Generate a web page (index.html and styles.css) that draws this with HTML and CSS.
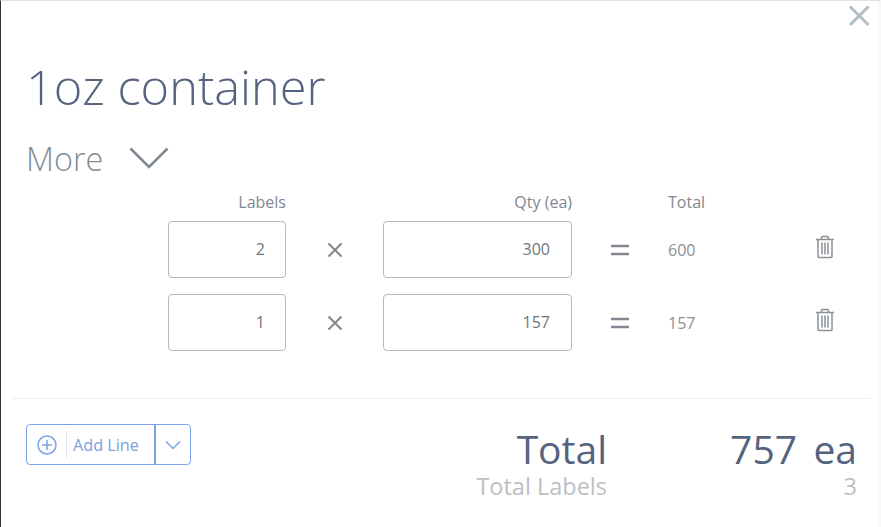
FILE: index.html
```html
<!DOCTYPE html>
<html lang="en">
<head>
<meta charset="utf-8">
<title>1oz container</title>
<link rel="stylesheet" href="styles.css">
</head>
<body>
<div class="modal">
  <button class="close" aria-label="Close">
    <svg width="24" height="24" viewBox="0 0 24 24"><path d="M3 2.500L21.500 21M21.500 2.500L3 21" class="close-x"/></svg>
  </button>
  <header class="head">
    <h1 class="title">1oz container</h1>
    <div class="more">
      <span>More</span>
      <svg width="40" height="24" viewBox="0 0 40 24"><path d="M1.500 2.500L20 21L38.500 2.500" class="chev"/></svg>
    </div>
  </header>
  <section class="lines">
    <div class="col-h col-end">Labels</div>
    <div></div>
    <div class="col-h col-end">Qty (ea)</div>
    <div></div>
    <div class="col-h">Total</div>
    <div></div>

    <div class="field field-labels">2</div>
    <div class="op"><svg width="16" height="16" viewBox="0 0 16 16"><path d="M1.500 1.500L14.500 14.500M14.500 1.500L1.500 14.500" class="op-s"/></svg></div>
    <div class="field">300</div>
    <div class="op"><svg width="20" height="12" viewBox="0 0 20 12"><path d="M1 2H19M1 10H19" class="op-e"/></svg></div>
    <div class="sum">600</div>
    <div class="trash"><svg width="20" height="24" viewBox="0 0 20 24"><path d="M1 4.500H19M6.500 4.500V2.500Q6.500 1.500 7.500 1.500H12.500Q13.500 1.500 13.500 2.500V4.500M3 4.500V21.500Q3 22.500 4 22.500H16Q17 22.500 17 21.500V4.500M7 7.500V19.500M10 7.500V19.500M13 7.500V19.500" class="bin"/></svg></div>

    <div class="field field-labels">1</div>
    <div class="op"><svg width="16" height="16" viewBox="0 0 16 16"><path d="M1.500 1.500L14.500 14.500M14.500 1.500L1.500 14.500" class="op-s"/></svg></div>
    <div class="field">157</div>
    <div class="op"><svg width="20" height="12" viewBox="0 0 20 12"><path d="M1 2H19M1 10H19" class="op-e"/></svg></div>
    <div class="sum">157</div>
    <div class="trash"><svg width="20" height="24" viewBox="0 0 20 24"><path d="M1 4.500H19M6.500 4.500V2.500Q6.500 1.500 7.500 1.500H12.500Q13.500 1.500 13.500 2.500V4.500M3 4.500V21.500Q3 22.500 4 22.500H16Q17 22.500 17 21.500V4.500M7 7.500V19.500M10 7.500V19.500M13 7.500V19.500" class="bin"/></svg></div>
  </section>
  <footer class="foot">
    <div class="add">
      <div class="add-main">
        <svg width="20" height="20" viewBox="0 0 20 20"><circle cx="10" cy="10" r="9" class="blue-s"/><path d="M10 5V15M5 10H15" class="blue-s"/></svg>
        <span class="add-sep"></span>
        <span class="add-text">Add Line</span>
      </div>
      <div class="add-drop">
        <svg width="16" height="10" viewBox="0 0 16 10"><path d="M1 1.500L8 8.500L15 1.500" class="blue-s"/></svg>
      </div>
    </div>
    <div class="totals">
      <div class="t-name">Total</div>
      <div class="t-num">757</div>
      <div class="t-unit">ea</div>
      <div class="s-name">Total Labels</div>
      <div class="s-num">3</div>
    </div>
  </footer>
</div>
</body>
</html>
```
FILE: styles.css
```css
* { box-sizing: border-box; }
html, body { margin: 0; height: 100%; background: #fff; }
body { font-family: "Open Sans", sans-serif; color: #7f8890; overflow: hidden; }

.modal {
  position: relative;
  height: 527px;
  width: 881px;
  border-top: 1px solid #dfe0e3;
  border-left: 1px solid #333;
  border-right: 3px solid #f8f8f8;
  padding-top: 56px;
}

.close { position: absolute; top: 3px; right: 7px; width: 24px; height: 24px; padding: 0; border: 0; background: none; }
.close svg { display: block; }
.close-x { fill: none; stroke: #b1bec6; stroke-width: 3; }

.head { padding-left: 25px; }
.title {
  margin: 0;
  font-weight: 300;
  font-size: 48.700px;
  line-height: 58px;
  color: #56637f;
}
.more {
  display: flex;
  align-items: center;
  gap: 26px;
  margin-top: 28px;
  font-weight: 300;
  font-size: 32.400px;
  line-height: 30px;
  color: #838d95;
}
.chev { fill: none; stroke: #7f8890; stroke-width: 2.500; }

.lines {
  display: grid;
  grid-template-columns: 118px 97px 189px 96px 130px 50px;
  grid-template-rows: 30px 73px 57px;
  margin-top: 18px;
  padding-left: 167px;
  padding-bottom: 47px;
  font-size: 16px;
  align-items: start;
}
.col-h { line-height: 20px; margin-top: 1px; }
.col-end { text-align: right; }

.field {
  height: 57px;
  border: 1px solid #b5b8bb;
  border-radius: 4px;
  padding-right: 21px;
  text-align: right;
  font-size: 16px;
  line-height: 54px;
  color: #6f777e;
}
.field-labels { padding-right: 20px; }
.op { height: 57px; display: flex; align-items: center; justify-content: center; }
.op svg { display: block; }
.op-s { fill: none; stroke: #7f8890; stroke-width: 2; }
.op-e { fill: none; stroke: #7f8890; stroke-width: 2.500; }
.sum { height: 57px; font-size: 16px; line-height: 58px; color: #8a9197; }
.trash { padding: 14px 0 0 17px; display: flex; }
.trash svg { display: block; }
.bin { fill: none; stroke: #8a9197; stroke-width: 1.500; }

.foot {
  margin: 0 7px 0 12px;
  border-top: 1px solid #eeeeee;
  padding: 25px 0 0 13px;
  display: flex;
  justify-content: space-between;
}

.add {
  display: flex;
  width: 165px;
  height: 41px;
  border: 1px solid #7ba3e6;
  border-radius: 4px;
  color: #7b9fe0;
}
.add-main { flex: 1; display: flex; align-items: center; padding-left: 10px; border-right: 2px solid #7ba3e6; }
.add-main svg { display: block; }
.add-sep { width: 1px; height: 27px; background: #e2e4e6; margin: 0 6px 0 9px; }
.add-text { font-size: 16.200px; line-height: 20px; }
.add-drop { width: 34px; display: flex; align-items: center; justify-content: center; }
.add-drop svg { display: block; }
.blue-s { fill: none; stroke: #7ba3e6; stroke-width: 1.500; }

.totals {
  display: grid;
  grid-template-columns: auto 190px 60px;
  margin-right: 14px;
  padding-top: 3px;
  justify-items: end;
  align-items: baseline;
}
.t-name, .t-num, .t-unit { font-size: 39px; line-height: 44px; color: #56637f; }
.s-name, .s-num { font-size: 23.500px; line-height: 30px; color: #bcc0c4; }
.s-num { grid-column: 2 / 4; }
```
